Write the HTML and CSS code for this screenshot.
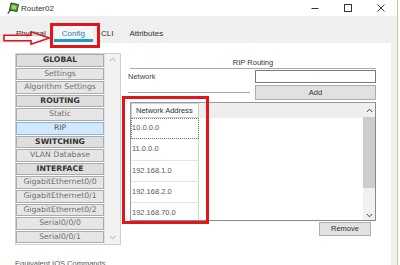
FILE: index.html
```html
<!DOCTYPE html>
<html>
<head>
<meta charset="utf-8">
<link rel="stylesheet" href="styles.css">
</head>
<body>
<div class="window">
  <header class="titlebar">
    <svg class="app-icon" viewBox="0 0 12 12"><polygon points="4,1 11.5,2.5 10,9.5 2.5,8" fill="#5c9c3c" stroke="#2b4a1c" stroke-width="1"/><polygon points="5,3 9.5,4 8.8,7.5 4.3,6.5" fill="#9fd27a"/><line x1="3.5" y1="8" x2="0.8" y2="11.5" stroke="#222" stroke-width="1.2"/></svg>
    <span class="title">Router02</span>
    <div class="controls">
      <span class="ctl"><svg viewBox="0 0 8 8"><line x1="0.5" y1="4.5" x2="7.5" y2="4.5" stroke="#333" stroke-width="1"/></svg></span>
      <span class="ctl"><svg viewBox="0 0 8 8"><rect x="0.5" y="0.5" width="7" height="7" fill="none" stroke="#333" stroke-width="1"/></svg></span>
      <span class="ctl"><svg viewBox="0 0 8 8"><path d="M0.5 0.5 L7.5 7.5 M7.5 0.5 L0.5 7.5" stroke="#333" stroke-width="1"/></svg></span>
    </div>
  </header>
  <nav class="tabs">
    <span class="tab first">Physical</span>
    <span class="tab active">Config</span>
    <span class="tab">CLI</span>
    <span class="tab">Attributes</span>
    <svg class="arrow" viewBox="0 0 48 14"><path d="M1 4.2 H28 V0.8 L46.5 7 L28 13.2 V9.8 H1 Z" fill="rgba(255,255,255,0.55)" stroke="#e0121a" stroke-width="1.6" stroke-linejoin="miter"/></svg>
    <div class="tab-mark"></div>
  </nav>
  <div class="body">
    <main class="content">
      <aside class="sidenav">
        <div class="navlist">
          <div class="nav-item head">GLOBAL</div>
          <div class="nav-item">Settings</div>
          <div class="nav-item">Algorithm Settings</div>
          <div class="nav-item head">ROUTING</div>
          <div class="nav-item">Static</div>
          <div class="nav-item selected">RIP</div>
          <div class="nav-item head">SWITCHING</div>
          <div class="nav-item">VLAN Database</div>
          <div class="nav-item head">INTERFACE</div>
          <div class="nav-item">GigabitEthernet0/0</div>
          <div class="nav-item">GigabitEthernet0/1</div>
          <div class="nav-item">GigabitEthernet0/2</div>
          <div class="nav-item">Serial0/0/0</div>
          <div class="nav-item">Serial0/0/1</div>
        </div>
        <div class="navscroll">
          <svg class="chev" viewBox="0 0 7 5"><polyline points="0.8,4 3.5,1.2 6.2,4" fill="none" stroke="#aaa" stroke-width="1"/></svg>
          <svg class="chev" viewBox="0 0 7 5"><polyline points="0.8,1 3.5,3.8 6.2,1" fill="none" stroke="#aaa" stroke-width="1"/></svg>
        </div>
      </aside>
      <section class="rip">
        <div class="rip-title">RIP Routing</div>
        <div class="net-grid">
          <div class="net-label">Network</div>
          <div class="net-input"></div>
          <div class="btn add-btn">Add</div>
        </div>
        <div class="addr-box">
          <div class="addr-table">
            <div class="addr-head"><div class="col-head">Network Address</div></div>
            <div class="addr-row focus">10.0.0.0</div>
            <div class="addr-row">11.0.0.0</div>
            <div class="addr-row">192.168.1.0</div>
            <div class="addr-row">192.168.2.0</div>
            <div class="addr-row">192.168.70.0</div>
          </div>
          <div class="vscroll">
            <div class="vs-arrow up"><svg class="chev" viewBox="0 0 7 5"><polyline points="0.8,4 3.5,1.2 6.2,4" fill="none" stroke="#444" stroke-width="1"/></svg></div>
            <div class="vs-thumb"></div>
            <div class="vs-track"></div>
            <div class="vs-arrow down"><svg class="chev" viewBox="0 0 7 5"><polyline points="0.8,1 3.5,3.8 6.2,1" fill="none" stroke="#444" stroke-width="1"/></svg></div>
          </div>
        </div>
        <div class="remove-row"><div class="btn remove-btn">Remove</div></div>
        <div class="col-mark"></div>
      </section>
    </main>
    <footer class="ios">Equivalent IOS Commands</footer>
  </div>
</div>
</body>
</html>
```
FILE: styles.css
```css
html, body {
  margin: 0;
  padding: 0;
}
body {
  width: 400px;
  height: 265px;
  overflow: hidden;
  background: #fff;
  font-family: "Liberation Sans", Arial, sans-serif;
}
.window {
  width: 397px;
  height: 265px;
  border-right: 1px solid #d6c38c;
  display: flex;
  flex-direction: column;
  overflow: hidden;
}
.titlebar {
  height: 16px;
  flex: none;
  display: flex;
  align-items: center;
}
.app-icon {
  display: block;
  width: 12px;
  height: 12px;
  margin-left: 7px;
}
.title {
  margin-left: 2px;
  font-size: 8px;
  color: #333;
}
.controls {
  margin-left: auto;
  display: flex;
}
.ctl {
  width: 33px;
  height: 16px;
  display: flex;
  align-items: center;
  justify-content: center;
}
.ctl svg {
  width: 8px;
  height: 8px;
  display: block;
}
.tabs {
  position: relative;
  height: 27px;
  flex: none;
  background: #efefef;
  display: flex;
  align-items: flex-end;
}
.tab {
  position: relative;
  height: 19px;
  padding: 0 8px;
  font-size: 8px;
  line-height: 19px;
  color: #333;
}
.tab.first {
  margin-left: 8px;
}
.tab.active {
  background: #f6f6f6;
  color: #2a80b5;
}
.tab.active::after {
  content: "";
  position: absolute;
  left: 0;
  right: 0;
  bottom: 1px;
  height: 3px;
  background: #1f9ac9;
}
.arrow {
  position: absolute;
  left: 3px;
  top: 15px;
  width: 48px;
  height: 14px;
}
.tab-mark {
  position: absolute;
  left: 50px;
  top: 7px;
  width: 50px;
  height: 25px;
  box-sizing: border-box;
  border: 3px solid #e3141c;
}
.body {
  flex: 1;
  display: flex;
  flex-direction: column;
  border-right: 6px solid #f0f0f0;
  min-height: 0;
}
.content {
  flex: 1;
  display: flex;
  align-items: flex-start;
  padding-top: 10px;
  min-height: 0;
}
.sidenav {
  margin-left: 15px;
  width: 106px;
  height: 192px;
  box-sizing: border-box;
  border: 1px solid #cfcfcf;
  display: flex;
}
.navlist {
  width: 88px;
  display: flex;
  flex-direction: column;
  gap: 1px;
}
.nav-item {
  height: 12.6px;
  box-sizing: border-box;
  border: 1px solid #ababab;
  background: #e6e6e6;
  font-family: "DejaVu Sans", Verdana, sans-serif;
  font-size: 7.7px;
  line-height: 10.6px;
  color: #707070;
  text-align: center;
  white-space: nowrap;
  overflow: hidden;
}
.nav-item.head {
  font-weight: bold;
  color: #333;
  background: #dedede;
}
.nav-item.selected {
  background: #d3e8fb;
  border-color: #82b6e6;
  color: #555;
}
.navscroll {
  flex: 1;
  background: #f2f2f2;
  border-left: 1px solid #e2e2e2;
  display: flex;
  flex-direction: column;
  justify-content: space-between;
  align-items: center;
  padding: 3px 0 4px;
}
.chev {
  display: block;
  width: 7px;
  height: 5px;
}
.rip {
  position: relative;
  margin-left: 7px;
  width: 248px;
}
.rip-title {
  margin-left: 2px;
  padding-top: 5px;
  line-height: 10px;
  font-size: 7.5px;
  color: #333;
  text-align: center;
  border-bottom: 1px solid #a8a8a8;
}
.net-grid {
  margin-top: 1px;
  display: grid;
  grid-template-columns: 122px 121px;
  grid-template-rows: 13px 17px;
  column-gap: 5px;
}
.net-label {
  grid-row: 1 / span 2;
  align-self: start;
  height: 23px;
  box-sizing: border-box;
  border-bottom: 1px solid #a8a8a8;
  font-size: 7.5px;
  line-height: 14px;
  color: #444;
}
.net-input {
  box-sizing: border-box;
  height: 13px;
  border: 1px solid #7a7a7a;
  background: #fff;
}
.btn {
  box-sizing: border-box;
  background: #e1e1e1;
  border: 1px solid #adadad;
  font-size: 7.5px;
  color: #333;
  text-align: center;
}
.add-btn {
  margin-top: 2px;
  height: 15px;
  line-height: 13px;
}
.addr-box {
  margin-top: 2px;
  margin-left: 2px;
  height: 119px;
  box-sizing: border-box;
  border: 1px solid #9a9a9a;
  border-right-color: #8a8a8a;
  border-bottom-color: #8a8a8a;
  display: flex;
  overflow: hidden;
}
.addr-table {
  flex: 1;
}
.addr-head {
  height: 15px;
  background: #eeeeee;
}
.col-head {
  width: 68px;
  height: 15px;
  box-sizing: border-box;
  border: 1px solid #d0d0d0;
  background: #fbfbfb;
  font-size: 7.5px;
  line-height: 13px;
  padding-left: 4px;
  color: #333;
}
.addr-row {
  width: 68px;
  height: 21.3px;
  box-sizing: border-box;
  border-bottom: 1px solid #e4e4e4;
  border-right: 1px solid #d4d4d4;
  font-size: 7.5px;
  line-height: 20px;
  padding-left: 1px;
  color: #555;
}
.addr-row.focus {
  outline: 1px dotted #808080;
  outline-offset: -1px;
}
.vscroll {
  width: 12px;
  background: #f0f0f0;
  display: flex;
  flex-direction: column;
}
.vs-arrow {
  display: flex;
  justify-content: center;
  align-items: center;
}
.vs-arrow.up {
  height: 14px;
}
.vs-arrow.down {
  height: 10px;
}
.vs-thumb {
  height: 71px;
  background: #cdcdcd;
}
.vs-track {
  flex: 1;
}
.remove-row {
  display: flex;
  justify-content: flex-end;
  margin-top: 1px;
  padding-right: 5px;
}
.remove-btn {
  width: 52px;
  height: 14px;
  line-height: 12px;
}
.col-mark {
  position: absolute;
  left: -6px;
  top: 43px;
  width: 87px;
  height: 128px;
  box-sizing: border-box;
  border: 3px solid #e3141c;
}
.ios {
  flex: none;
  height: 17px;
  padding-top: 11px;
  padding-left: 15px;
  box-sizing: border-box;
  font-size: 7.5px;
  line-height: 10px;
  color: #555;
  white-space: nowrap;
}
```
